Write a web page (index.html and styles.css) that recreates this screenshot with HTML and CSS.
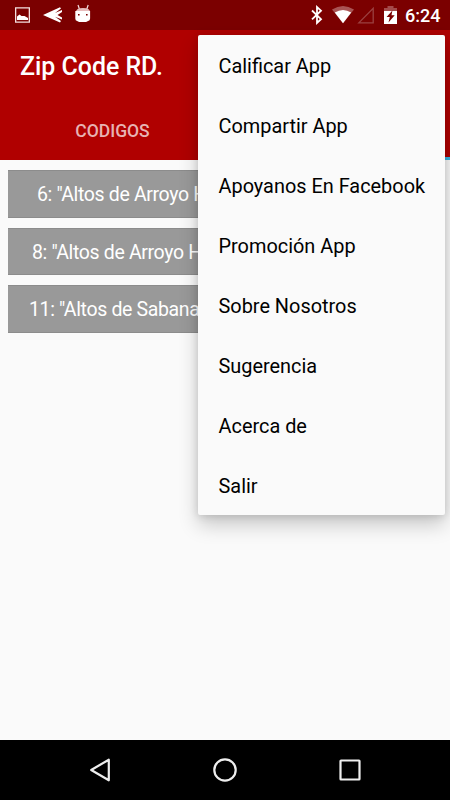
FILE: index.html
```html
<!DOCTYPE html>
<html lang="es">
<head>
<meta charset="utf-8">
<title>Zip Code RD.</title>
<link rel="stylesheet" href="styles.css">
</head>
<body>
<div class="screen">
  <header class="status">
    <svg class="status-icons" width="100" height="30" viewBox="0 0 100 30">
      <path fill="#f3dede" fill-rule="evenodd" d="M15 7.3h15v15.400H15zM16.300 8.600v12.800h12.400V8.600z"/>
      <path fill="#fff" d="M17 20v-3.500l2.500-2 2 1.500h3l3.500 2V20z"/>
      <path fill="#fff" d="M43 15L60 7.200l1 1.400-6 4.400 7-3v2l-4.500 3 4.500 2.500v2L55 16.800l6 4.200-1 1.600z"/>
      <path fill="none" stroke="#f3dede" stroke-width="1.200" d="M78 5l1.400 4M88.200 5l-1.400 4"/>
      <path fill="#e7bcbc" d="M76 12q0-4 7-4t7 4z"/>
      <path fill="#fff" d="M75.300 11h14.800v7.500q0 2-2 2.500l-2 1h-7l-2-1q-1.800-.5-1.800-2.500z"/>
      <path fill="#7b0000" d="M78 14h1.600v1.600H78zM86 14h1.600v1.600H86z"/>
    </svg>
    <svg class="status-icons" width="101" height="30" viewBox="300 0 101 30">
      <path fill="none" stroke="#fff" stroke-width="1.800" d="M312 10.500l9 8.700-4 3.800V7l4 3.700-9 8.700"/>
      <path fill="#a95454" d="M332 9.500Q343 2.500 354 9.500L343 23.300z"/>
      <path fill="#fff" d="M334.800 12.600Q343 7.300 351.200 12.600L343 23.300z"/>
      <path fill="none" stroke="#9b4040" stroke-width="1.300" d="M358.800 22.900L373.200 8.400V22.900z"/>
      <path fill="#a44a4a" d="M387.500 6h6v2h3.500v4h-13V8h3.500z"/>
      <path fill="#fff" d="M384 11h13v13h-13z"/>
      <path fill="#7b0000" d="M392.400 10.500l-5.800 6.500h3.200l-1.300 5.500 6.200-7.200h-3.200z"/>
    </svg>
    <span class="clock">6:24</span>
  </header>
  <section class="appbar">
    <h1 class="title">Zip Code RD.</h1>
    <nav class="tabs">
      <span class="tab">CODIGOS</span>
      <span class="tab tab-active"></span>
    </nav>
  </section>
  <main class="content">
    <div class="row row-first">6: "Altos de Arroyo H</div>
    <div class="row row-second">8: "Altos de Arroyo H</div>
    <div class="row row-third">11: "Altos de Sabana</div>
  </main>
  <footer class="navbar">
    <svg width="26" height="26" viewBox="0 0 26 26"><path d="M4.200 13L21.800 2.700v20.600z"/></svg>
    <svg width="26" height="26" viewBox="0 0 26 26"><circle cx="13" cy="13" r="10.700"/></svg>
    <svg width="26" height="26" viewBox="0 0 26 26"><rect x="3.500" y="3.500" width="19" height="19" rx=".5"/></svg>
  </footer>
  <ul class="menu">
    <li>Calificar App</li>
    <li>Compartir App</li>
    <li>Apoyanos En Facebook</li>
    <li>Promoción App</li>
    <li>Sobre Nosotros</li>
    <li>Sugerencia</li>
    <li>Acerca de</li>
    <li>Salir</li>
  </ul>
</div>
</body>
</html>
```
FILE: styles.css
```css
* { box-sizing: border-box; }
body { margin: 0; font-family: Roboto, sans-serif; }
.screen {
  position: relative;
  display: flex;
  flex-direction: column;
  width: 450px;
  height: 800px;
  overflow: hidden;
  background: #fafafa;
}
.status {
  display: flex;
  justify-content: space-between;
  height: 30px;
  background: #7b0000;
  color: #fff;
}
.status-icons { display: block; flex: none; }
.status-icons + .status-icons { margin-left: auto; }
.clock {
  width: 49px;
  padding-left: 4px;
  font-size: 18px;
  font-weight: 500;
  line-height: 31px;
}
.appbar { height: 130px; background: #b00000; }
.title {
  margin: 0;
  padding-left: 20px;
  height: 70px;
  color: #fff;
  font-size: 24.900px;
  font-weight: 500;
  line-height: 74px;
}
.tabs { display: flex; height: 60px; }
.tab {
  flex: 1;
  color: #e7b3b3;
  font-size: 17.500px;
  font-weight: 500;
  line-height: 62px;
  text-align: center;
}
.tab-active { border-bottom: 3px solid #33b5e5; }
.content {
  display: flex;
  flex: 1;
  flex-direction: column;
  gap: 10px;
  padding: 10px 8px;
}
.row {
  height: 47.500px;
  background: #999;
  border: 1px solid #8c8c8c;
  border-width: 1px 0;
  color: #fff;
  font-size: 19.500px;
  letter-spacing: -.35px;
  line-height: 47px;
  white-space: nowrap;
  overflow: hidden;
}
.row-first { padding-left: 29px; }
.row-second { padding-left: 24px; }
.row-third { padding-left: 21px; }
.navbar {
  display: flex;
  justify-content: space-between;
  align-items: center;
  height: 60px;
  padding: 0 87px;
  background: #000;
}
.navbar svg { fill: none; stroke: #eee; stroke-width: 2.200; stroke-linejoin: round; }
.menu {
  position: absolute;
  top: 35px;
  right: 5px;
  width: 247px;
  height: 480px;
  margin: 0;
  padding: 0 0 0 20.500px;
  list-style: none;
  background: #fafafa;
  border-radius: 2px;
  box-shadow: 0 10px 20px rgba(0, 0, 0, .2), 0 1px 8px rgba(0, 0, 0, .14);
  color: #000;
  font-size: 19.900px;
}
.menu li { height: 60px; line-height: 63px; white-space: nowrap; }
```
